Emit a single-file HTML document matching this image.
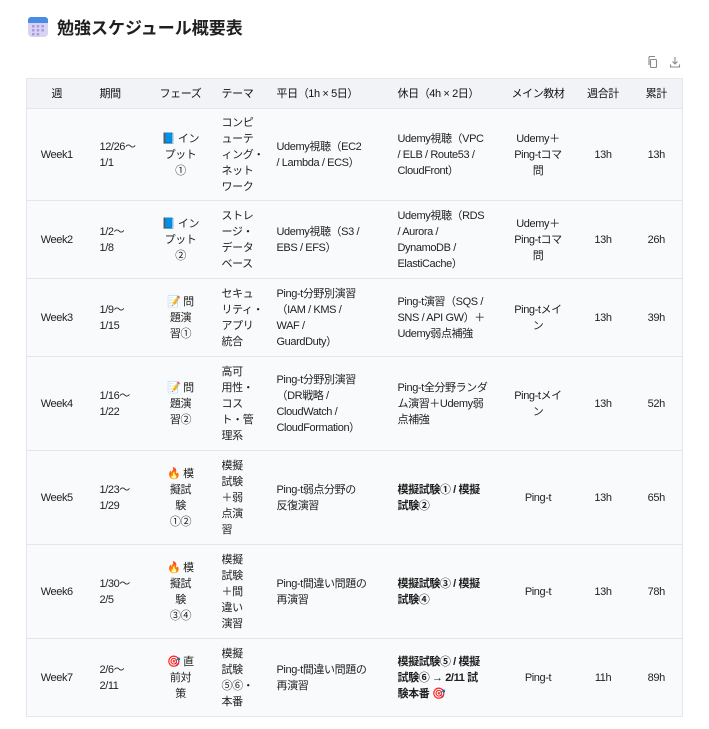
<!DOCTYPE html>
<html><head><meta charset="utf-8"><style>
body{margin:0;background:#fff;font-family:"Liberation Sans","Noto Sans CJK JP",sans-serif;color:#1f1f1f;width:709px;height:729px;overflow:hidden;position:relative}
.title{position:absolute;left:28px;top:14px;display:flex;align-items:center}
.title h1{margin:0 0 0 9px;font-size:17px;font-weight:bold;letter-spacing:0px}
.ic{position:absolute;top:55px}
table{position:absolute;left:26px;top:78px;border-collapse:collapse;table-layout:fixed;width:656px;font-size:11px;letter-spacing:-0.4px;line-height:16px;border:1px solid #e3e6ea}
th{background:#f1f3f6;font-weight:normal;color:#111;height:29px;border-bottom:1px solid #e3e6ea;white-space:nowrap;padding:0;font-size:11px}
td{background:#f9fafb;border-top:1px solid #e3e6ea;padding:0;white-space:nowrap;vertical-align:middle;overflow:hidden}
.l{text-align:left;padding-left:13px}
.c{text-align:center}
b{font-weight:bold}
</style></head><body>
<div class="title">
<svg width="20" height="22" viewBox="0 0 20 22"><rect x="0" y="1" width="20" height="20" rx="4" fill="#d9d3f3"/><rect x="0" y="1" width="20" height="6" rx="3" fill="#4b8be8"/><rect x="0" y="4" width="20" height="3" fill="#4b8be8"/><g fill="#a99be0"><rect x="4" y="9" width="2.5" height="2.5"/><rect x="8.7" y="9" width="2.5" height="2.5"/><rect x="13.4" y="9" width="2.5" height="2.5"/><rect x="4" y="13" width="2.5" height="2.5"/><rect x="8.7" y="13" width="2.5" height="2.5"/><rect x="13.4" y="13" width="2.5" height="2.5"/><rect x="4" y="17" width="2.5" height="2.5"/><rect x="8.7" y="17" width="2.5" height="2.5"/></g></svg>
<h1>勉強スケジュール概要表</h1></div>
<svg class="ic" style="left:646px" width="14" height="14" viewBox="0 0 14 14" fill="none" stroke="#888" stroke-width="1.1"><rect x="4.5" y="4.5" width="6" height="8" rx="1"/><path d="M3 10V2.5a1 1 0 0 1 1-1h5"/></svg>
<svg class="ic" style="left:668px" width="14" height="14" viewBox="0 0 14 14" fill="none" stroke="#888" stroke-width="1.1"><path d="M7 2v7M4.5 6.5 7 9l2.5-2.5M2.5 9.5v2.5h9V9.5"/></svg>
<table>
<colgroup><col style="width:60px"><col style="width:66px"><col style="width:56px"><col style="width:55px"><col style="width:121px"><col style="width:116px"><col style="width:75px"><col style="width:55px"><col style="width:52px"></colgroup>
<tr style="height:30px"><th>週</th><th class="l">期間</th><th>フェーズ</th><th class="l">テーマ</th><th class="l">平日（1h × 5日）</th><th class="l">休日（4h × 2日）</th><th>メイン教材</th><th>週合計</th><th>累計</th></tr>
<tr style="height:92px"><td class="c">Week1</td><td class="l">12/26〜<br>1/1</td><td class="c">📘 イン<br>プット<br>①</td><td class="l">コンピ<br>ューテ<br>ィング・<br>ネット<br>ワーク</td><td class="l">Udemy視聴（EC2<br>/ Lambda / ECS）</td><td class="l">Udemy視聴（VPC<br>/ ELB / Route53 /<br>CloudFront）</td><td class="c">Udemy＋<br>Ping-tコマ<br>問</td><td class="c">13h</td><td class="c">13h</td></tr>
<tr style="height:78px"><td class="c">Week2</td><td class="l">1/2〜<br>1/8</td><td class="c">📘 イン<br>プット<br>②</td><td class="l">ストレ<br>ージ・<br>データ<br>ベース</td><td class="l">Udemy視聴（S3 /<br>EBS / EFS）</td><td class="l">Udemy視聴（RDS<br>/ Aurora /<br>DynamoDB /<br>ElastiCache）</td><td class="c">Udemy＋<br>Ping-tコマ<br>問</td><td class="c">13h</td><td class="c">26h</td></tr>
<tr style="height:78px"><td class="c">Week3</td><td class="l">1/9〜<br>1/15</td><td class="c">📝 問<br>題演<br>習①</td><td class="l">セキュ<br>リティ・<br>アプリ<br>統合</td><td class="l">Ping-t分野別演習<br>（IAM / KMS /<br>WAF /<br>GuardDuty）</td><td class="l">Ping-t演習（SQS /<br>SNS / API GW）＋<br>Udemy弱点補強</td><td class="c">Ping-tメイ<br>ン</td><td class="c">13h</td><td class="c">39h</td></tr>
<tr style="height:94px"><td class="c">Week4</td><td class="l">1/16〜<br>1/22</td><td class="c">📝 問<br>題演<br>習②</td><td class="l">高可<br>用性・<br>コス<br>ト・管<br>理系</td><td class="l">Ping-t分野別演習<br>（DR戦略 /<br>CloudWatch /<br>CloudFormation）</td><td class="l">Ping-t全分野ランダ<br>ム演習＋Udemy弱<br>点補強</td><td class="c">Ping-tメイ<br>ン</td><td class="c">13h</td><td class="c">52h</td></tr>
<tr style="height:94px"><td class="c">Week5</td><td class="l">1/23〜<br>1/29</td><td class="c">🔥 模<br>擬試<br>験<br>①②</td><td class="l">模擬<br>試験<br>＋弱<br>点演<br>習</td><td class="l">Ping-t弱点分野の<br>反復演習</td><td class="l"><b>模擬試験① / 模擬<br>試験②</b></td><td class="c">Ping-t</td><td class="c">13h</td><td class="c">65h</td></tr>
<tr style="height:94px"><td class="c">Week6</td><td class="l">1/30〜<br>2/5</td><td class="c">🔥 模<br>擬試<br>験<br>③④</td><td class="l">模擬<br>試験<br>＋間<br>違い<br>演習</td><td class="l">Ping-t間違い問題の<br>再演習</td><td class="l"><b>模擬試験③ / 模擬<br>試験④</b></td><td class="c">Ping-t</td><td class="c">13h</td><td class="c">78h</td></tr>
<tr style="height:78px"><td class="c">Week7</td><td class="l">2/6〜<br>2/11</td><td class="c">🎯 直<br>前対<br>策</td><td class="l">模擬<br>試験<br>⑤⑥・<br>本番</td><td class="l">Ping-t間違い問題の<br>再演習</td><td class="l"><b>模擬試験⑤ / 模擬<br>試験⑥ → 2/11 試<br>験本番 🎯</b></td><td class="c">Ping-t</td><td class="c">11h</td><td class="c">89h</td></tr>
</table>
</body></html>
